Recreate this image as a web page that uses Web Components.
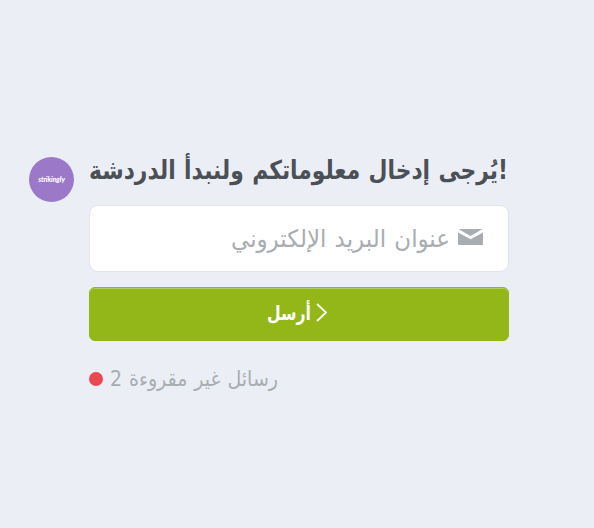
<!DOCTYPE html>
<html lang="ar">
<head>
<meta charset="utf-8">
<title>Chat</title>
<style>
    body {
        margin: 0;
        background-color: #ebeef5;
        font-family: "DejaVu Sans", sans-serif;
    }
</style>
</head>
<body>
<chat-prompt>
    <chat-avatar slot="avatar">strikingly</chat-avatar>
    <fit-line slot="title" width="419" size="26" weight="700">يُرجى إدخال معلوماتكم ولنبدأ الدردشة!</fit-line>
    <email-field><fit-line width="219" size="24">عنوان البريد الإلكتروني</fit-line></email-field>
    <send-button><fit-line width="44" size="20" weight="700">أرسل</fit-line></send-button>
    <unread-note><fit-line width="168" size="21">2 رسائل غير مقروءة</fit-line></unread-note>
</chat-prompt>

<script>
class FitLine extends HTMLElement {
    #template = `
        <style>
            :host {
                display: block;
                flex: none;
                direction: ltr;
                white-space: nowrap;
                word-spacing: 1px;
            }

            span {
                display: inline-block;
                transform-origin: 0 50%;
            }
        </style>
        <span><slot></slot></span>
    `;


    constructor() {
        super();
        this.attachShadow({ mode: 'open' }).innerHTML = this.#template;
    }


    connectedCallback() {
        const width = parseInt(this.getAttribute('width'));
        const span = this.shadowRoot.querySelector('span');

        this.style.width = `${width}px`;
        this.style.fontSize = `${this.getAttribute('size')}px`;
        this.style.fontWeight = this.getAttribute('weight') || '400';
        // joined letters can't take letter-spacing, so the line is scaled
        span.style.transform = `scaleX(${width / span.getBoundingClientRect().width})`;
    }
}


class ChatAvatar extends HTMLElement {
    #template = `
        <style>
            :host {
                display: flex;
                align-items: center;
                justify-content: center;
                width: 45px;
                height: 45px;
                border-radius: 50%;
                background-color: #9c78c8;
                color: #fff;
                font: italic 900 7px/1 Lato, sans-serif;
                letter-spacing: -0.1px;
            }
        </style>
        <slot></slot>
    `;


    constructor() {
        super();
        this.attachShadow({ mode: 'open' }).innerHTML = this.#template;
    }
}


class EmailField extends HTMLElement {
    #template = `
        <style>
            :host {
                display: flex;
                direction: rtl;
                align-items: center;
                gap: 8px;
                box-sizing: border-box;
                height: 67px;
                padding: 0 25px;
                border: 1px solid #e1e4e9;
                border-radius: 9px;
                background-color: #fff;
                color: #a8adb1;
                line-height: 36px;
            }

            svg {
                flex: none;
                margin-bottom: 4px;
            }
        </style>
        <svg width="25" height="16" viewBox="0 0 25 16" fill="#a8adb1">
            <path d="M0.5 0H24.5L12.5 7Z"/>
            <path d="M0 3.5L12.5 10.2L25 3.5V15Q25 16 24 16H1Q0 16 0 15Z"/>
        </svg>
        <slot></slot>
    `;


    constructor() {
        super();
        this.attachShadow({ mode: 'open' }).innerHTML = this.#template;
    }
}


class SendButton extends HTMLElement {
    #template = `
        <style>
            :host {
                display: flex;
                direction: rtl;
                align-items: center;
                justify-content: center;
                gap: 5px;
                box-sizing: border-box;
                height: 54px;
                margin-top: 15px;
                padding: 0 5px 3px 0;
                border: 1px solid #93b719;
                border-radius: 6px;
                background-color: #93b719;
                box-shadow: inset 0 1px 0 #b3cd5e;
                color: #fff;
                line-height: 30px;
            }
        </style>
        <svg width="11" height="19" viewBox="0 0 11 19" fill="none" stroke="#fff" stroke-width="1.8">
            <path d="M1 1L10 9.5L1 18"/>
        </svg>
        <slot></slot>
    `;


    constructor() {
        super();
        this.attachShadow({ mode: 'open' }).innerHTML = this.#template;
    }
}


class UnreadNote extends HTMLElement {
    #template = `
        <style>
            :host {
                display: flex;
                align-items: center;
                gap: 7px;
                height: 32px;
                margin-top: 22px;
                color: #a8adb1;
                line-height: 32px;
            }

            .dot {
                width: 14px;
                height: 14px;
                border-radius: 50%;
                background-color: #e94850;
            }
        </style>
        <div class="dot"></div>
        <slot></slot>
    `;


    constructor() {
        super();
        this.attachShadow({ mode: 'open' }).innerHTML = this.#template;
    }
}


class ChatPrompt extends HTMLElement {
    #template = `
        <style>
            :host {
                display: flex;
                gap: 15px;
                box-sizing: border-box;
                height: 528px;
                padding: 149px 85px 0 29px;
            }

            .avatar {
                padding-top: 8px;
            }

            .content {
                width: 420px;
            }

            .title {
                height: 56px;
                color: #4b5056;
                line-height: 42px;
            }
        </style>
        <div class="avatar"><slot name="avatar"></slot></div>
        <div class="content">
            <div class="title"><slot name="title"></slot></div>
            <slot></slot>
        </div>
    `;


    constructor() {
        super();
        this.attachShadow({ mode: 'open' }).innerHTML = this.#template;
    }
}

window.customElements.define('fit-line', FitLine);
window.customElements.define('chat-avatar', ChatAvatar);
window.customElements.define('email-field', EmailField);
window.customElements.define('send-button', SendButton);
window.customElements.define('unread-note', UnreadNote);
window.customElements.define('chat-prompt', ChatPrompt);
</script>
</body>
</html>
